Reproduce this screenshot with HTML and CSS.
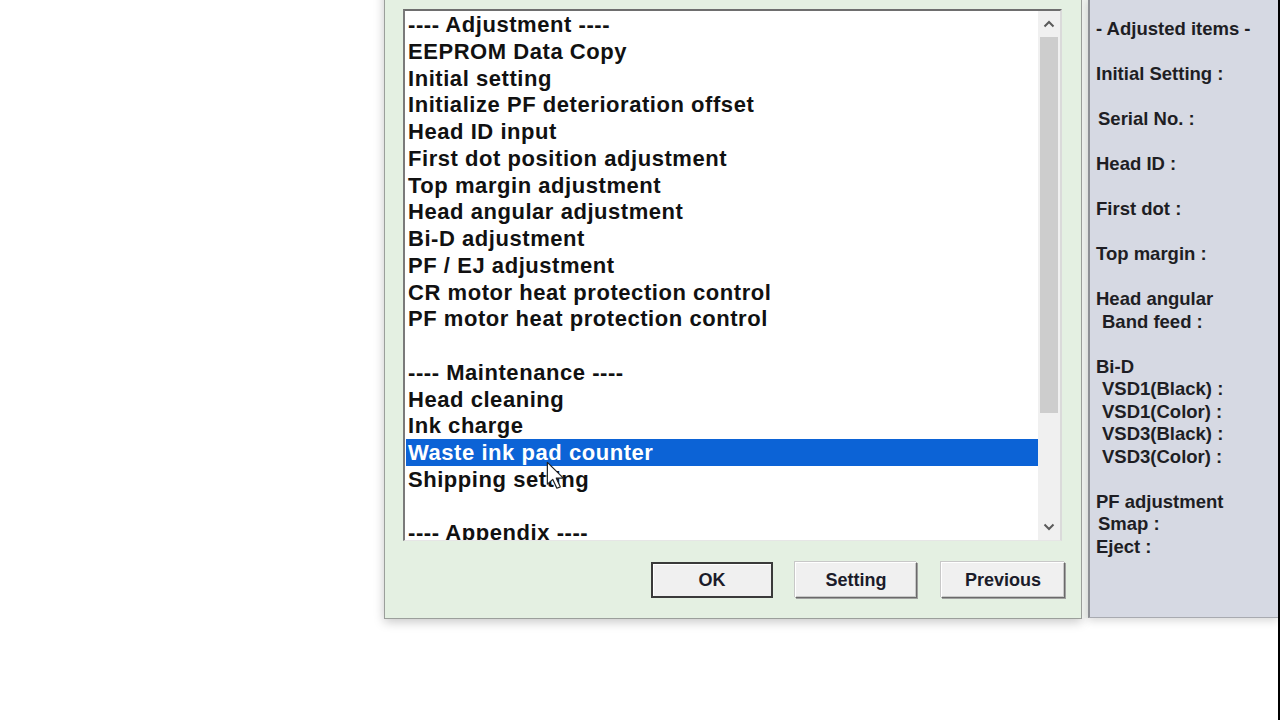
FILE: index.html
```html
<!DOCTYPE html>
<html>
<head>
<meta charset="utf-8">
<link rel="stylesheet" href="styles.css">
</head>
<body>
<div class="desktop">
  <div class="dialog">
    <div class="listbox">
      <div class="items">
        <div class="item">---- Adjustment ----</div>
        <div class="item">EEPROM Data Copy</div>
        <div class="item">Initial setting</div>
        <div class="item">Initialize PF deterioration offset</div>
        <div class="item">Head ID input</div>
        <div class="item">First dot position adjustment</div>
        <div class="item">Top margin adjustment</div>
        <div class="item">Head angular adjustment</div>
        <div class="item">Bi-D adjustment</div>
        <div class="item">PF / EJ adjustment</div>
        <div class="item">CR motor heat protection control</div>
        <div class="item">PF motor heat protection control</div>
        <div class="item"></div>
        <div class="item">---- Maintenance ----</div>
        <div class="item">Head cleaning</div>
        <div class="item">Ink charge</div>
        <div class="item selected">Waste ink pad counter</div>
        <div class="item">Shipping setting</div>
        <div class="item"></div>
        <div class="item">---- Appendix ----</div>
      </div>
      <div class="scrollbar">
        <div class="arrow">
          <svg width="12" height="8" viewBox="0 0 12 8"><path d="M1.5 6.5 L6 2 L10.5 6.5" fill="none" stroke="#5a5a5a" stroke-width="2"/></svg>
        </div>
        <div class="track"><div class="thumb"></div></div>
        <div class="arrow">
          <svg width="12" height="8" viewBox="0 0 12 8"><path d="M1.5 1.5 L6 6 L10.5 1.5" fill="none" stroke="#5a5a5a" stroke-width="2"/></svg>
        </div>
      </div>
    </div>
    <div class="buttons">
      <button class="btn default">OK</button>
      <button class="btn">Setting</button>
      <button class="btn wide">Previous</button>
    </div>
  </div>

  <div class="gapstrip"></div>

  <div class="panel">
    <div class="line">- Adjusted items -</div>
    <div class="gap"></div>
    <div class="line">Initial Setting :</div>
    <div class="gap"></div>
    <div class="line i1">Serial No. :</div>
    <div class="gap"></div>
    <div class="line">Head ID :</div>
    <div class="gap"></div>
    <div class="line">First dot :</div>
    <div class="gap"></div>
    <div class="line">Top margin :</div>
    <div class="gap"></div>
    <div class="line">Head angular</div>
    <div class="line i2">Band feed :</div>
    <div class="gap"></div>
    <div class="line">Bi-D</div>
    <div class="line i2">VSD1(Black) :</div>
    <div class="line i2">VSD1(Color) :</div>
    <div class="line i2">VSD3(Black) :</div>
    <div class="line i2">VSD3(Color) :</div>
    <div class="gap"></div>
    <div class="line">PF adjustment</div>
    <div class="line i1">Smap :</div>
    <div class="line">Eject :</div>
  </div>
  <div class="edge"></div>

  <svg class="cursor" width="19" height="30" viewBox="0 0 14 22">
    <path d="M1 1 L1 17 L5 13.5 L8 20 L10.5 19 L7.6 12.6 L12.8 12.6 Z" fill="#ffffff" stroke="#222" stroke-width="0.9" stroke-linejoin="round"/>
  </svg>
</div>
</body>
</html>
```
FILE: styles.css
```css
html, body {
  margin: 0;
  padding: 0;
  background: #ffffff;
}
.desktop {
  position: relative;
  width: 1280px;
  height: 720px;
  overflow: hidden;
  font-family: "Liberation Sans", Arial, sans-serif;
}
.dialog {
  position: absolute;
  left: 384px;
  top: -30px;
  width: 696px;
  height: 647px;
  background: #e4f0e2;
  border: 1px solid #9b9f9b;
  box-shadow: 0 3px 10px rgba(0, 0, 0, 0.22);
  display: flex;
  flex-direction: column;
}
.listbox {
  margin: 38px 0 0 18px;
  width: 655px;
  height: 529px;
  background: #ffffff;
  border-top: 2px solid #6e6e6e;
  border-left: 2px solid #7a7a7a;
  border-right: 2px solid #dadada;
  border-bottom: 1px solid #e6e6e6;
  display: flex;
  overflow: hidden;
}
.items {
  flex: 1;
  padding-left: 1px;
  overflow: hidden;
}
.item {
  height: 26.75px;
  line-height: 27.5px;
  font-size: 22px;
  font-weight: bold;
  letter-spacing: 0.55px;
  color: #111111;
  padding-left: 2px;
  white-space: nowrap;
}
.item.selected {
  background: #0c63d6;
  color: #ffffff;
}
.scrollbar {
  width: 22px;
  background: #f0f0f0;
  display: flex;
  flex-direction: column;
}
.arrow {
  height: 26px;
  display: flex;
  align-items: center;
  justify-content: center;
}
.track {
  flex: 1;
  padding: 0 2px;
}
.thumb {
  height: 376px;
  background: #cdcdcd;
}
.buttons {
  display: flex;
  margin: 21px 0 0 266px;
}
.btn {
  flex-shrink: 0;
  width: 122px;
  height: 36px;
  margin-right: 22px;
  font-family: "Liberation Sans", Arial, sans-serif;
  font-size: 18px;
  font-weight: bold;
  color: #1b1b2a;
  background: #f0f0f0;
  border: 1px solid;
  border-color: #ffffff #6a6a6a #6a6a6a #ffffff;
  box-shadow: 1px 1px 0 #a0a0a0, inset -1px -1px 0 #c8c8c8, -1px -1px 0 #c8c8c8;
  padding: 0;
}
.btn.default {
  border: 2px solid #3a3a3a;
  box-shadow: inset 1px 1px 0 #ffffff;
}
.btn.wide {
  width: 124px;
  margin-left: 2px;
  margin-right: 0;
}
.gapstrip {
  position: absolute;
  left: 1082px;
  top: 0;
  width: 6px;
  height: 618px;
  background: #eef1ee;
}
.panel {
  position: absolute;
  left: 1088px;
  top: -2px;
  width: 182px;
  height: 599px;
  padding: 20px 0 0 6px;
  background: #d6d9e3;
  border-left: 2px solid #8d8f95;
  border-bottom: 1px solid #a8aab0;
  box-shadow: 0 3px 8px rgba(0, 0, 0, 0.15);
  color: #1e1e24;
}
.line {
  font-size: 18.5px;
  font-weight: bold;
  line-height: 22.5px;
  height: 22.5px;
  white-space: nowrap;
}
.gap {
  height: 22.5px;
}
.i1 {
  padding-left: 2px;
}
.i2 {
  padding-left: 6px;
}
.edge {
  position: absolute;
  left: 1278px;
  top: 0;
  width: 2px;
  height: 720px;
  background: #000000;
}
.cursor {
  position: absolute;
  left: 546px;
  top: 461px;
}
```
